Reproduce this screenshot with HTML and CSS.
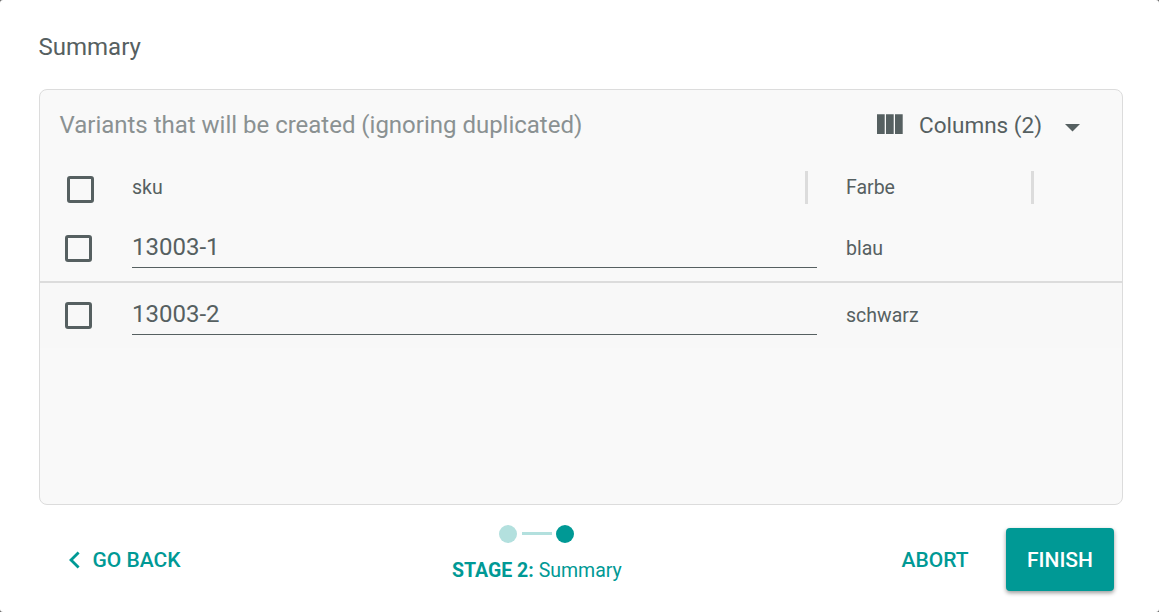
FILE: index.html
```html
<!DOCTYPE html>
<html lang="en">
<head>
<meta charset="utf-8">
<title>Summary</title>
<link rel="stylesheet" href="styles.css">
</head>
<body>
<main class="dialog">
  <h1 class="title">Summary</h1>
  <section class="panel">
    <header class="toolbar">
      <h2 class="caption">Variants that will be created (ignoring duplicated)</h2>
      <button class="columns">
        <svg class="columns-icon" width="26" height="20" viewBox="0 0 26 20"><path d="M0 .3h7.700v19.700H0zM9 .3h7.700v19.700H9zM18 .3h7.700v19.700H18z" fill="currentColor"/></svg>
        <span class="columns-label">Columns (2)</span>
        <svg class="caret" width="15" height="8" viewBox="0 0 15 8"><path d="M0 0h15L7.5 7.5z" fill="currentColor"/></svg>
      </button>
    </header>
    <div class="grid">
      <div class="row row-head">
        <span class="check"></span>
        <span class="cell">sku</span>
        <span class="divider"></span>
        <span class="cell cell-farbe">Farbe</span>
        <span class="divider"></span>
      </div>
      <div class="row">
        <span class="check"></span>
        <span class="field">13003-1</span>
        <span class="cell">blau</span>
      </div>
      <div class="row row-alt">
        <span class="check"></span>
        <span class="field">13003-2</span>
        <span class="cell">schwarz</span>
      </div>
    </div>
  </section>
  <footer class="footer">
    <button class="link back">
      <svg width="11" height="18" viewBox="0 0 11 18"><path d="M9.6 1.4L2 9l7.600 7.600" fill="none" stroke="currentColor" stroke-width="2.800"/></svg>
      <span class="back-label">GO BACK</span>
    </button>
    <div class="stepper">
      <div class="dots"><i class="dot"></i><i class="line"></i><i class="dot dot-on"></i></div>
      <div class="stage"><b>STAGE 2:</b> Summary</div>
    </div>
    <button class="link abort">ABORT</button>
    <button class="finish">FINISH</button>
  </footer>
</main>
</body>
</html>
```
FILE: styles.css
```css
* { box-sizing: border-box; }
body {
  margin: 0;
  background: #666;
  font-family: Roboto, sans-serif;
  color: #566061;
}
button {
  border: 0;
  padding: 0;
  background: none;
  font: inherit;
  color: inherit;
}
.dialog {
  display: flex;
  flex-direction: column;
  width: 1159px;
  height: 612px;
  padding: 30px 36px 0 39px;
  background: #fff;
  border-radius: 3px;
}
.title {
  margin: 0 0 25px -0.5px;
  font-size: 24px;
  line-height: 34px;
  font-weight: 400;
}
.panel {
  height: 416px;
  border: 1px solid #dcdcdc;
  border-radius: 8px;
  background: #f9f9f9;
}
.toolbar {
  display: flex;
  align-items: center;
  justify-content: space-between;
  height: 70px;
  padding: 0 42px 0 19.5px;
}
.caption {
  margin: 0;
  font-size: 24px;
  font-weight: 400;
  letter-spacing: -0.01px;
  color: #8a9192;
}
.columns { display: flex; align-items: center; font-size: 22.5px; line-height: 28px; }
.columns-icon { margin-top: -2px; }
.columns-label { margin: 0 23px 0 16px; }
.caret { margin-top: 5px; }
.row {
  display: flex;
  align-items: center;
  height: 67px;
  padding-left: 25px;
  font-size: 19.5px;
  border-bottom: 2px solid #dcdcdc;
}
.row-head {
  height: 56px;
  padding: 0 0 1px 27px;
  border-bottom: 0;
}
.row-alt {
  height: 65px;
  border-bottom: 0;
  background: #f8f8f8;
}
.check {
  flex: none;
  width: 27px;
  height: 27px;
  margin-right: 40px;
  border: 3px solid #566061;
  border-radius: 3px;
}
.row-head .check { margin: 4px 38px 0 0; }
.row-head .cell { width: 673px; }
.row-head .cell-farbe { width: 223px; padding-left: 38px; }
.divider {
  width: 3px;
  height: 33px;
  background: #dcdcdc;
}
.field {
  width: 685px;
  height: 38px;
  margin-right: 29px;
  border-bottom: 1px solid #566061;
  font-size: 24px;
  line-height: 34px;
}
.footer {
  display: flex;
  height: 107px;
  padding: 0 9px 0 30px;
  font-size: 21px;
  color: #009995;
}
.link, .finish {
  height: 63px;
  margin-top: 23px;
  font-weight: 500;
}
.back { display: flex; align-items: center; width: 383px; }
.back-label { margin-left: 12.5px; }
.stepper { width: 170px; padding-top: 20px; }
.dots {
  display: flex;
  align-items: center;
  gap: 5px;
  height: 18px;
  padding-left: 47px;
}
.dot { width: 18px; height: 18px; border-radius: 50%; background: #b3e0de; }
.dot-on { margin-left: -1px; background: #009995; }
.line { width: 30px; height: 3px; margin-top: -1px; background: #b3e0de; }
.stage { margin-top: 14px; font-size: 19.5px; line-height: 28px; white-space: nowrap; }
.abort { margin-left: auto; margin-right: 37.5px; }
.finish {
  width: 108px;
  border-radius: 4px;
  background: #009995;
  color: #fff;
  box-shadow: 0 2px 4px rgba(0, 0, 0, .4);
}
```
